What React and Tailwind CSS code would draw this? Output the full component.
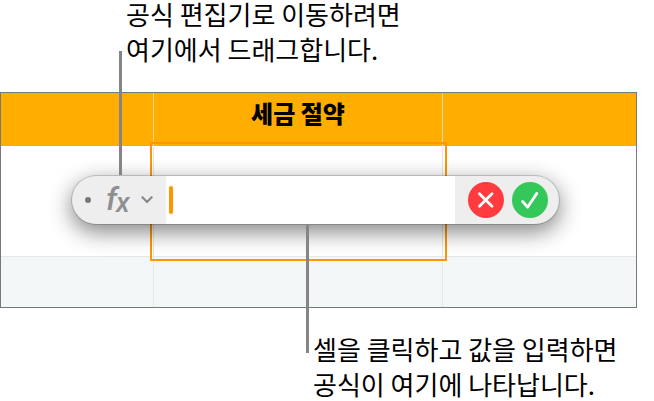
import React from "react";

const cell = "border-r border-[#e6e8e8] last:border-r-0 p-0";

function FormulaEditor() {
  return (
    <form
      onSubmit={(e) => e.preventDefault()}
      className="absolute top-[84px] left-[72px] flex h-[48px] w-[487px] rounded-full bg-[#eeeeee] shadow-[0_0_0_1px_rgba(0,0,0,0.16),0_7px_22px_1px_rgba(0,0,0,0.48)]"
    >
      <div className="flex w-[94px] shrink-0 items-center">
        <span className="ml-[13px] size-[6px] rounded-full bg-[#77777a]" />
        <button
          type="button"
          aria-label="fx"
          className="ml-[15px] flex h-full w-[26px] items-center font-[Roboto,sans-serif] font-medium text-[#8e8e93] italic"
        >
          <span className="pb-[2px] text-[32px] leading-8">f</span>
          <span className="-ml-px pt-[6px] text-[28px] leading-6">x</span>
        </button>
        <svg viewBox="0 0 12 8" className="ml-[9px] h-[8px] w-[12px]" fill="none" stroke="#8a8a8e" strokeWidth="2.2" strokeLinecap="round" strokeLinejoin="round">
          <path d="M1.4 1.2 6 6 10.6 1.2" />
        </svg>
      </div>
      <div className="flex min-w-0 flex-1 items-center bg-white pl-[3px]">
        <span className="h-[28px] w-[4px] shrink-0 rounded-full bg-[#ff9500]" />
        <input aria-label="공식" className="h-full min-w-0 flex-1 bg-transparent outline-none" />
      </div>
      <div className="flex w-[104px] shrink-0 items-center gap-[8px] pl-[13px]">
        <button type="button" aria-label="취소" className="size-[36px] shrink-0 rounded-full bg-[#ff3b40]">
          <svg viewBox="0 0 36 36" fill="none" stroke="#fff" strokeWidth="2.8" strokeLinecap="round">
            <path d="M11.5 11.8 24 24.3M24 11.8 11.5 24.3" />
          </svg>
        </button>
        <button type="submit" aria-label="확인" className="size-[36px] shrink-0 rounded-full bg-[#34c759]">
          <svg viewBox="0 0 36 36" fill="none" stroke="#fff" strokeWidth="2.8" strokeLinecap="round" strokeLinejoin="round">
            <path d="M10.6 19.5 15.6 25.2 24.8 11.4" />
          </svg>
        </button>
      </div>
    </form>
  );
}

export default function App() {
  return (
    <main className="flex flex-col bg-white font-['Noto_Sans_CJK_KR',sans-serif] text-black">
      <p className="-mt-[4px] h-[96px] pl-[126px] text-[26px] leading-[35px]">
        공식 편집기로 이동하려면
        <br />
        여기에서 드래그합니다.
      </p>
      <div className="relative mr-[17px]">
        <table className="w-full table-fixed border-separate border-spacing-0 border border-[#77787c]">
          <colgroup>
            <col className="w-[153px]" />
            <col className="w-[289px]" />
            <col />
          </colgroup>
          <thead>
            <tr className="h-[53px] bg-[#ffae00]">
              <th className="border-r border-[#f5d590] p-0" />
              <th className="border-r border-[#e8d6ac] p-0 pb-[14px] text-[24px] leading-[35px] font-black">세금 절약</th>
              <th className="p-0" />
            </tr>
          </thead>
          <tbody>
            <tr className="h-[110px]">
              <td className={cell} />
              <td className={cell + " relative"}>
                <div className="absolute -top-[4px] -right-[5px] -bottom-[5px] -left-[4px] border-2 border-[#ff9500]" />
              </td>
              <td className={cell} />
            </tr>
            <tr className="h-[51px] bg-[#f3f7f7]">
              <td className={cell + " border-t"} />
              <td className={cell + " border-t"} />
              <td className={cell + " border-t"} />
            </tr>
          </tbody>
        </table>
        <FormulaEditor />
        <div className="absolute -top-[41px] left-[119px] h-[124px] w-[3px] bg-[#858585]" />
        <div className="absolute top-[133px] left-[306px] h-[128px] w-[3px] bg-[#858585]" />
      </div>
      <p className="mt-[23px] pl-[313px] text-[26px] leading-[35px]">
        셀을 클릭하고 값을 입력하면
        <br />
        공식이 여기에 나타납니다.
      </p>
    </main>
  );
}
